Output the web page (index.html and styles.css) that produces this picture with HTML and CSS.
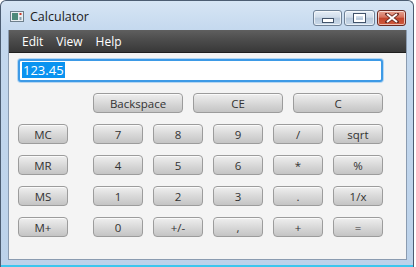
FILE: index.html
```html
<!DOCTYPE html>
<html>
<head>
<meta charset="utf-8">
<link rel="stylesheet" href="styles.css">
</head>
<body>
<div class="window">
  <div class="titlebar">
    <svg class="appicon" width="14" height="11" viewBox="0 0 14 11">
      <rect x="0.5" y="0.5" width="13" height="10" fill="#e8eef2" stroke="#6d7f8c"/>
      <rect x="2" y="2" width="6" height="7" fill="#4d8a7a"/>
      <rect x="9.5" y="2" width="2" height="2" fill="#cc3a2a"/>
      <rect x="9.5" y="6" width="2" height="3" fill="#8aa0ad"/>
    </svg>
    <span class="title">Calculator</span>
    <div class="winbtns">
      <div class="wb">
        <span class="minbar"></span>
      </div>
      <div class="wb">
        <span class="maxbox"></span>
      </div>
      <div class="wb close">
        <svg width="14" height="10" viewBox="0 0 14 10">
          <path d="M2 1 L12 9 M12 1 L2 9" stroke="#6a2a22" stroke-width="3.6" stroke-linecap="square"/>
          <path d="M2 1 L12 9 M12 1 L2 9" stroke="#ffffff" stroke-width="2"/>
        </svg>
      </div>
    </div>
  </div>
  <div class="body">
    <div class="menubar">
      <span class="menu">Edit</span>
      <span class="menu">View</span>
      <span class="menu">Help</span>
    </div>
    <div class="content">
      <div class="field"><span class="sel">123.45</span></div>
      <div class="toprow">
        <button class="btn wide">Backspace</button>
        <button class="btn wide">CE</button>
        <button class="btn wide">C</button>
      </div>
      <div class="grid">
        <button class="btn">MC</button>
        <button class="btn">7</button>
        <button class="btn">8</button>
        <button class="btn">9</button>
        <button class="btn">/</button>
        <button class="btn">sqrt</button>
        <button class="btn">MR</button>
        <button class="btn">4</button>
        <button class="btn">5</button>
        <button class="btn">6</button>
        <button class="btn">*</button>
        <button class="btn">%</button>
        <button class="btn">MS</button>
        <button class="btn">1</button>
        <button class="btn">2</button>
        <button class="btn">3</button>
        <button class="btn">.</button>
        <button class="btn">1/x</button>
        <button class="btn">M+</button>
        <button class="btn">0</button>
        <button class="btn">+/-</button>
        <button class="btn">,</button>
        <button class="btn">+</button>
        <button class="btn">=</button>
      </div>
    </div>
  </div>
  <div class="bottomline"></div>
</div>
</body>
</html>
```

FILE: styles.css
```css
html, body {
  margin: 0;
  padding: 0;
  background: #ffffff;
  width: 416px;
  height: 267px;
  overflow: hidden;
}

.window {
  width: 414px;
  height: 267px;
  box-sizing: border-box;
  border: 1px solid #4c5d72;
  border-bottom: none;
  border-radius: 6px 6px 0 0;
  background: linear-gradient(to bottom, #d6e5f4 0px, #c4d8ee 30px, #bcd2ea 100%);
  display: flex;
  flex-direction: column;
  font-family: "Open Sans", "Noto Sans", sans-serif;
}

.titlebar {
  height: 29px;
  display: flex;
  align-items: center;
  padding-left: 9px;
}

.appicon {
  display: block;
  margin-top: 1px;
}

.title {
  margin-left: 6px;
  font-size: 12.5px;
  color: #1a1a1a;
  margin-top: 2px;
}

.winbtns {
  margin-left: auto;
  margin-right: 7px;
  display: flex;
  gap: 2px;
  align-self: flex-start;
  margin-top: 9px;
}

.wb {
  width: 29px;
  height: 16px;
  box-sizing: border-box;
  border: 1px solid #6f8196;
  border-radius: 3px;
  background: linear-gradient(to bottom, #e6eef7 0%, #d0dcea 45%, #b8c9dc 50%, #c9d8e8 100%);
  display: flex;
  align-items: center;
  justify-content: center;
  box-shadow: inset 0 0 0 1px rgba(255,255,255,0.6);
}

.wb:nth-child(2) {
  width: 31px;
}

.minbar {
  width: 10px;
  height: 3px;
  background: #ffffff;
  border: 1px solid #42536a;
  margin-top: 5px;
}

.maxbox {
  width: 7px;
  height: 4px;
  border: 2px solid #ffffff;
  outline: 1px solid #42536a;
}

.close {
  width: 29px;
  border-color: #6b2a22;
  background: linear-gradient(to bottom, #e8a493 0%, #d4715c 45%, #c2442b 50%, #cf5a3e 100%);
}

.body {
  margin: 0 6px 0 7px;
  border-left: 1px solid #8a9bb0;
  border-right: 1px solid #8a9bb0;
  border-bottom: 1px solid #8a9bb0;
  background: #f4f4f4;
  height: 229px;
  display: flex;
  flex-direction: column;
}

.menubar {
  height: 22px;
  background: linear-gradient(to bottom, #5f5f5f 0%, #4a4a4a 50%, #383838 100%);
  border-bottom: 1px solid #1e1e1e;
  display: flex;
  align-items: center;
  padding-left: 13px;
  gap: 13px;
}

.menu {
  color: #ffffff;
  font-size: 12px;
}

.content {
  padding: 6px 0 0 9px;
}

.field {
  width: 365px;
  height: 23px;
  box-sizing: border-box;
  border: 2px solid #3d9ae6;
  border-radius: 3px;
  background: #ffffff;
  padding: 1px 0 0 2px;
  font-size: 13px;
  line-height: 16px;
  box-shadow: 0 0 0 1px #b5d6f2;
}

.sel {
  background: #0a93f0;
  color: #ffffff;
  display: inline-block;
  padding: 0 1px;
}

.toprow {
  display: flex;
  gap: 10px;
  margin: 11px 0 0 75px;
}

.grid {
  display: grid;
  grid-template-columns: 65px repeat(5, 50px);
  column-gap: 10px;
  row-gap: 11px;
  margin-top: 11px;
}

.btn {
  width: 50px;
  height: 20px;
  box-sizing: border-box;
  border: 1px solid #9c9c9c;
  border-radius: 4px;
  background: linear-gradient(to bottom, #efefef 0%, #d9d9d9 50%, #c4c4c4 100%);
  font-family: "Open Sans", "Noto Sans", sans-serif;
  font-size: 11.5px;
  color: #333333;
  padding: 0;
  line-height: 17px;
  box-shadow: inset 0 1px 0 rgba(255,255,255,0.7);
}

.btn.wide {
  width: 90px;
}

.bottomline {
  margin-top: auto;
  height: 2px;
  background: #3cc6ee;
}
```
